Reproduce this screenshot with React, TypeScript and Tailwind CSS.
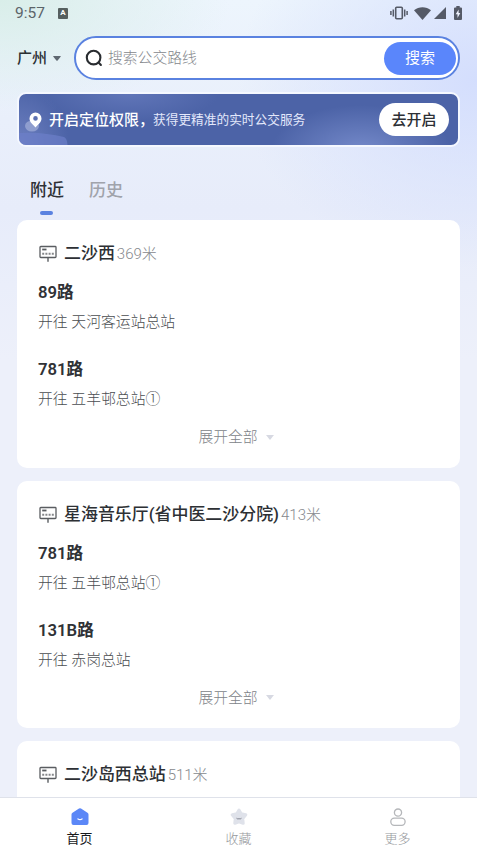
type Route = { name: string; to: string };
type Station = { name: string; distance: string; routes: Route[] };

const stations: Station[] = [
  {
    name: "二沙西",
    distance: "369米",
    routes: [
      { name: "89路", to: "天河客运站总站" },
      { name: "781路", to: "五羊邨总站①" },
    ],
  },
  {
    name: "星海音乐厅(省中医二沙分院)",
    distance: "413米",
    routes: [
      { name: "781路", to: "五羊邨总站①" },
      { name: "131B路", to: "赤岗总站" },
    ],
  },
  { name: "二沙岛西总站", distance: "511米", routes: [] },
];

function StatusBar() {
  return (
    <div className="flex h-[26px] items-center px-[15px] text-[#5b6469]">
      <span className="w-[43px] text-[15.5px] leading-[28px]">9:57</span>
      <span className="flex h-[11px] w-[10px] items-center justify-center rounded-[1px] bg-[#56605f] text-[8px] font-bold text-white">A</span>
      <div className="ml-auto flex items-center text-[#555a67]">
        <svg width="18" height="14" viewBox="0 0 18 14" fill="none" stroke="currentColor">
          <rect x="5.7" y="1.2" width="6.6" height="11.6" rx="1" strokeWidth="1.6" />
          <path d="M3.3 3.5v7M14.7 3.5v7M.9 5v4M17.1 5v4" strokeWidth="1.5" />
        </svg>
        <svg className="ml-[6px]" width="17" height="13" viewBox="0 0 17 13" fill="currentColor">
          <path d="M0 3.2C4.8-.9 12.2-.9 17 3.2L8.5 13z" />
        </svg>
        <svg className="ml-[3px]" width="12" height="12" viewBox="0 0 12 12" fill="currentColor">
          <path d="M12 0v12H0z" />
        </svg>
        <svg className="ml-[8px]" width="8" height="14" viewBox="0 0 8 14">
          <path d="M2.3 0h3.4v1.4H7q1 0 1 1V13q0 1-1 1H1q-1 0-1-1V2.4q0-1 1-1h1.3z" fill="currentColor" />
          <path d="M4.6 3.5L1.7 8.2h1.8V12l2.8-4.9H4.6z" fill="#f0f3ff" />
        </svg>
      </div>
    </div>
  );
}

function SearchRow() {
  return (
    <div className="mt-[10px] flex h-[44px] items-center px-[17px]">
      <span className="text-[15px] font-medium text-[#2b2f33]">广州</span>
      <svg className="ml-[6px]" width="8" height="5" viewBox="0 0 8 5" fill="#5f6871">
        <path d="M.7 0h6.6q.9 0 .3.8L4.6 4.5q-.6.7-1.2 0L.4.8Q-.2 0 .7 0z" />
      </svg>
      <div className="ml-[13px] flex h-[44px] flex-1 items-center rounded-full border-2 border-[#5a82e0] bg-white pl-[9px] pr-[2px]">
        <svg width="18" height="18" viewBox="0 0 18 18" fill="none" stroke="#292c30" strokeWidth="2.1" strokeLinecap="round">
          <circle cx="8.6" cy="8.6" r="6.8" />
          <path d="M13.6 13.6l2.3 2.3" />
        </svg>
        <span className="ml-[5px] text-[14.8px] font-light text-[#85888d]">搜索公交路线</span>
        <button className="ml-auto h-[33px] w-[72px] rounded-full bg-[#5a86fb] text-[15px] text-white">搜索</button>
      </div>
    </div>
  );
}

function PermissionBanner() {
  return (
    <div className="mx-[17px] mt-[12px] flex h-[55px] items-center overflow-hidden rounded-[9px] border-2 border-[#f5f8ff] bg-[#4c63a7] bg-[radial-gradient(ellipse_90px_28px_at_25%_0%,#6075b8,transparent),radial-gradient(ellipse_90px_45px_at_78%_110%,#7489c9,transparent),radial-gradient(ellipse_50px_60px_at_0%_100%,#6d80c0,transparent)]">
      <svg className="shrink-0" width="50" height="51" viewBox="0 0 50 51">
        <path d="M0 51V39q16-1 28 1 9 1 17 3 3 1 3.5 8z" fill="#6c7fc9" opacity=".7" />
        <ellipse cx="13" cy="32" rx="7" ry="5.5" fill="#a8b4db" opacity=".65" />
        <path fillRule="evenodd" d="M16.5 18.5a6 6 0 0 1 6 6c0 4-4 6.5-6 9-2-2.5-6-5-6-9a6 6 0 0 1 6-6zm0 3.6a2.3 2.3 0 1 0 0 4.6 2.3 2.3 0 0 0 0-4.6z" fill="#fff" />
      </svg>
      <span className="ml-[-20px] shrink-0 pt-[2px] text-[15px] font-medium text-white">开启定位权限，</span>
      <span className="ml-[-1px] whitespace-nowrap pt-[1px] text-[12.7px] text-[#e3e8fb]">获得更精准的实时公交服务</span>
      <button className="ml-auto mr-[9px] h-[33px] w-[70px] shrink-0 rounded-full bg-white pt-[1px] text-[15px] font-medium text-[#2d3035]">去开启</button>
    </div>
  );
}

function Tabs() {
  return (
    <div className="mt-[29px] flex h-[44px] gap-[25px] pl-[30px] text-[17px] leading-[28px]">
      <div className="flex flex-col items-center font-medium text-[#2e3136]">
        附近
        <span className="mr-[1px] mt-[7px] h-[4px] w-[13px] rounded-full bg-[#5a82e0]" />
      </div>
      <div className="font-medium text-[#a0a3ab]">历史</div>
    </div>
  );
}

function StopIcon() {
  return (
    <svg className="shrink-0" width="18" height="18" viewBox="0 0 18 18" fill="none" stroke="#5a5d61">
      <rect x="1" y="1.5" width="16" height="11" rx=".8" strokeWidth="1.3" />
      <path d="M9 12.5v4.3" strokeWidth="1.4" />
      <path d="M3.2 4.5h4.3" strokeWidth="1.8" />
      <path d="M3.2 8.8h12" strokeWidth="2" strokeDasharray="2 1.2" stroke="#85878a" />
    </svg>
  );
}

function StationCard({ station }: { station: Station }) {
  return (
    <section className="h-[247.5px] shrink-0 rounded-[10px] bg-white px-[21px] pt-[21px]">
      <div className="flex h-[26px] items-center">
        <span className="ml-[1px] flex">
          <StopIcon />
        </span>
        <h2 className="ml-[7px] text-[16.95px] font-medium text-[#2d3034]">{station.name}</h2>
        <span className="ml-[2px] mt-[1px] text-[15px] font-light text-[#85888d]">{station.distance}</span>
      </div>
      <div className="mt-[14px] flex flex-col gap-[25px]">
        {station.routes.map((route) => (
          <div key={route.name}>
            <h3 className="h-[24px] text-[16.7px] font-semibold leading-[24px] text-[#303236]">{route.name}</h3>
            <p className="mt-[6px] h-[22px] text-[14.85px] font-light leading-[23px] text-[#4a4d51]">开往 {route.to}</p>
          </div>
        ))}
      </div>
      {station.routes.length > 0 && (
        <div className="mt-[15px] flex items-center justify-center gap-[8px] pr-[5px] text-[14.8px] font-light leading-[24px] text-[#808388]">
          展开全部
          <svg width="8" height="5" viewBox="0 0 8 5" fill="#d7d9e2">
            <path d="M0 0h8L4 5z" />
          </svg>
        </div>
      )}
    </section>
  );
}

function BottomNav() {
  return (
    <nav className="flex h-[52px] shrink-0 border-t border-[#dfe2ea] bg-white pt-[10px] text-[13px] leading-[20px]">
      <div className="flex flex-1 flex-col items-center text-[#17191c]">
        <svg width="18" height="18" viewBox="0 0 18 18">
          <path d="M8 .6q1-.6 2 0l6.5 4.2q1 .6 1 1.8v8.4q0 2-2 2H2.5q-2 0-2-2V6.6q0-1.2 1-1.8z" fill="#5b87f7" />
          <path d="M7 11q2 1.3 4 0" stroke="#fff" strokeWidth="1.4" fill="none" strokeLinecap="round" />
        </svg>
        <span className="mt-[3px]">首页</span>
      </div>
      <div className="flex flex-1 flex-col items-center font-light text-[#96999d]">
        <svg width="18" height="18" viewBox="0 0 18 18">
          <path d="M9 2l2.2 3.8 4.6 1-3 3.7.4 4.8L9 13.8l-4.2 1.5.4-4.8-3-3.7 4.6-1z" fill="#dfe2ea" stroke="#dfe2ea" strokeWidth="3" strokeLinejoin="round" />
          <path d="M6.8 10.5q1.1 1 2.2.2 1.1.8 2.2-.2" stroke="#858894" fill="none" strokeLinecap="round" />
        </svg>
        <span className="mt-[3px]">收藏</span>
      </div>
      <div className="flex flex-1 flex-col items-center font-light text-[#96999d]">
        <svg width="18" height="18" viewBox="0 0 18 18" fill="none" stroke="#b5b7ba" strokeWidth="1.3">
          <circle cx="9" cy="4.6" r="3.6" />
          <rect x="1.8" y="10.2" width="14.3" height="7.1" rx="3.5" />
        </svg>
        <span className="mt-[3px]">更多</span>
      </div>
    </nav>
  );
}

export default function App() {
  return (
    <div className="flex h-[849px] w-[477px] flex-col overflow-hidden bg-[#edf0fa] bg-[radial-gradient(ellipse_230px_110px_at_0%_0%,#d9eee9,transparent),radial-gradient(ellipse_240px_190px_at_100%_80px,#d4defd,transparent),linear-gradient(180deg,#edf5fd_0px,#e9effb_120px,#e7ecfa_210px,#edf0fa_360px)] font-[Roboto,'Noto_Sans_CJK_SC',sans-serif]">
      <StatusBar />
      <SearchRow />
      <PermissionBanner />
      <Tabs />
      <main className="flex min-h-0 flex-1 flex-col gap-[13px] overflow-hidden px-[17px]">
        {stations.map((station) => (
          <StationCard key={station.name} station={station} />
        ))}
      </main>
      <BottomNav />
    </div>
  );
}
